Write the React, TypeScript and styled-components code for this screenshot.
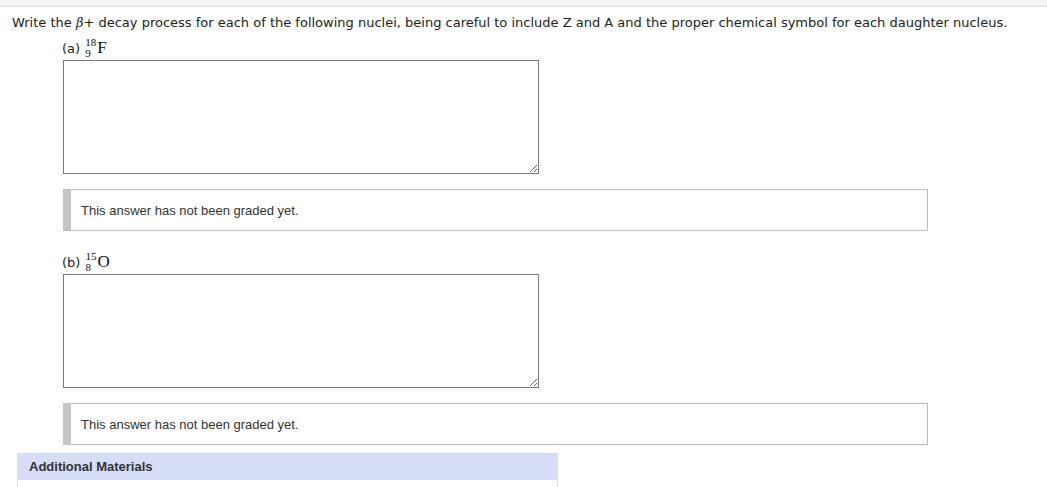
import React from "react";
import styled, { createGlobalStyle } from "styled-components";

const Global = createGlobalStyle`
  html, body { margin: 0; padding: 0; background: #fff; }
  body { font-family: "DejaVu Sans", Verdana, sans-serif; color: #222; }
`;

const TopBand = styled.div`
  height: 6px;
  background: #f5f5f5;
  border-bottom: 1px solid #dddddd;
`;

const Question = styled.div`
  padding: 8px 0 0 12px;
  font-size: 13px;
  line-height: 16px;
  color: #222;
  white-space: nowrap;
`;

const Beta = styled.span`
  font-family: "DejaVu Serif", "Liberation Serif", serif;
  font-style: italic;
`;

const Parts = styled.div`
  padding-left: 62px;
`;

const Part = styled.div<{ $top: number }>`
  margin-top: ${(p) => p.$top}px;
`;

const Label = styled.div`
  display: flex;
  align-items: flex-end;
  height: 26px;
  font-size: 13px;
  color: #222;
`;

const LabelText = styled.span`
  line-height: 16px;
  margin-right: 5px;
`;

const Nuclide = styled.span`
  display: inline-flex;
  align-items: flex-end;
  font-family: "Liberation Serif", "DejaVu Serif", serif;
  color: #111;
`;

const Scripts = styled.span`
  display: inline-flex;
  flex-direction: column;
  align-items: flex-start;
  font-size: 11px;
  line-height: 11px;
  margin-right: 1px;
  margin-bottom: -2px;
`;

const Symbol = styled.span`
  font-size: 17px;
  line-height: 18px;
`;

const Answer = styled.textarea`
  display: block;
  box-sizing: border-box;
  width: 476px;
  height: 114px;
  margin: 3px 0 0 1px;
  border: 1px solid #7a7a7a;
  border-radius: 0;
  padding: 2px;
  font-family: "DejaVu Sans", sans-serif;
  background: #fff;
  outline: none;
`;

const Feedback = styled.div`
  box-sizing: border-box;
  width: 865px;
  height: 42px;
  margin: 15px 0 0 1px;
  border: 1px solid #bdbdbd;
  border-left: 8px solid #c4c4c4;
  display: flex;
  align-items: center;
  padding-left: 10px;
  font-family: "Liberation Sans", Arial, sans-serif;
  font-size: 13px;
  color: #333;
`;

const Materials = styled.div`
  box-sizing: border-box;
  width: 541px;
  margin: 8px 0 0 17px;
  border-left: 1px solid #d5ddf7;
  border-right: 1px solid #d5ddf7;
  height: 40px;
`;

const MaterialsHeader = styled.div`
  height: 27px;
  background: #d5ddf7;
  display: flex;
  align-items: center;
  padding-left: 11px;
  font-family: "Liberation Sans", Arial, sans-serif;
  font-weight: bold;
  font-size: 13px;
  color: #333;
`;

type Nuc = { label: string; a: string; z: string; sym: string };

const parts: Nuc[] = [
  { label: "(a)", a: "18", z: "9", sym: "F" },
  { label: "(b)", a: "15", z: "8", sym: "O" },
];

export default function App() {
  return (
    <>
      <Global />
      <TopBand />
      <Question>
        Write the <Beta>β</Beta>+ decay process for each of the following nuclei, being careful to include Z and A and the proper chemical symbol for each daughter nucleus.
      </Question>
      <Parts>
        {parts.map((p, i) => (
          <Part key={p.label} $top={i === 0 ? 0 : 14}>
            <Label>
              <LabelText>{p.label}</LabelText>
              <Nuclide>
                <Scripts>
                  <span>{p.a}</span>
                  <span>{p.z}</span>
                </Scripts>
                <Symbol>{p.sym}</Symbol>
              </Nuclide>
            </Label>
            <Answer />
            <Feedback>This answer has not been graded yet.</Feedback>
          </Part>
        ))}
      </Parts>
      <Materials>
        <MaterialsHeader>Additional Materials</MaterialsHeader>
      </Materials>
    </>
  );
}
